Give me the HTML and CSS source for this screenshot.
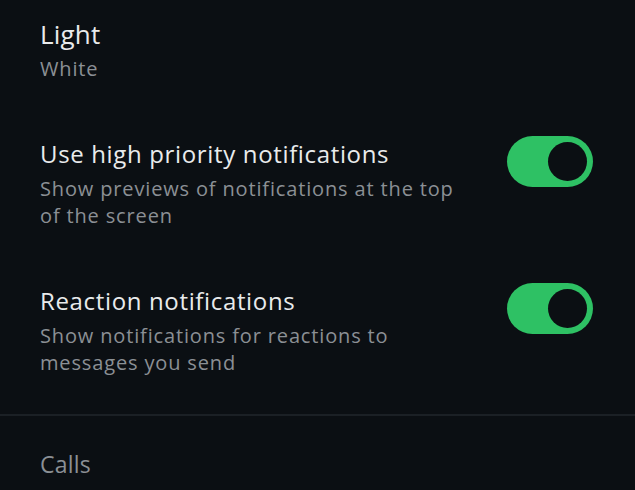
FILE: index.html
```html
<!DOCTYPE html>
<html lang="en">
<head>
<meta charset="utf-8">
<title>Settings</title>
<link rel="stylesheet" href="styles.css">
</head>
<body>
<main class="settings">
  <section class="group">
    <div class="row row-first">
      <div class="text">
        <div class="title title-lg">Light</div>
        <div class="sub">White</div>
      </div>
    </div>
    <div class="row">
      <div class="text">
        <div class="title">Use high priority notifications</div>
        <div class="sub">Show previews of notifications at the top<br>of the screen</div>
      </div>
      <div class="switch on" role="switch" aria-checked="true"><span class="knob"></span></div>
    </div>
    <div class="row">
      <div class="text">
        <div class="title">Reaction notifications</div>
        <div class="sub">Show notifications for reactions to<br>messages you send</div>
      </div>
      <div class="switch on" role="switch" aria-checked="true"><span class="knob"></span></div>
    </div>
  </section>
  <hr class="divider">
  <section class="group">
    <div class="header">Calls</div>
  </section>
</main>
</body>
</html>
```
FILE: styles.css
```css
html, body {
  margin: 0;
  padding: 0;
  background: #0b0f13;
}
body {
  width: 635px;
  height: 490px;
  overflow: hidden;
  font-family: "Open Sans", "Noto Sans", sans-serif;
}
.settings {
  display: flex;
  flex-direction: column;
}
.group {
  display: flex;
  flex-direction: column;
  padding: 0 42px 0 40px;
}
.row {
  display: flex;
  align-items: flex-start;
  justify-content: space-between;
  padding: 27px 0 28px;
}
.row-first {
  padding-top: 17px;
}
.text {
  display: flex;
  flex-direction: column;
}
.title {
  font-size: 24px;
  line-height: 34px;
  letter-spacing: 0.65px;
  color: #e9ebec;
}
.title-lg {
  font-size: 26px;
  letter-spacing: 0.2px;
}
.sub {
  margin-top: 4px;
  font-size: 20px;
  line-height: 27px;
  letter-spacing: 0.85px;
  color: #8b9095;
}
.switch {
  box-sizing: border-box;
  width: 86px;
  height: 51px;
  margin-top: -1px;
  padding: 6px;
  border-radius: 26px;
  background: #2ec164;
  display: flex;
  justify-content: flex-end;
  flex-shrink: 0;
}
.knob {
  width: 39px;
  height: 39px;
  border-radius: 50%;
  background: #0b0f13;
}
.divider {
  margin: 10px 0 0;
  border: 0;
  height: 2px;
  background: #1b2025;
}
.header {
  padding-top: 31px;
  font-size: 23px;
  line-height: 34px;
  letter-spacing: 0.2px;
  color: #8b9095;
}
```
